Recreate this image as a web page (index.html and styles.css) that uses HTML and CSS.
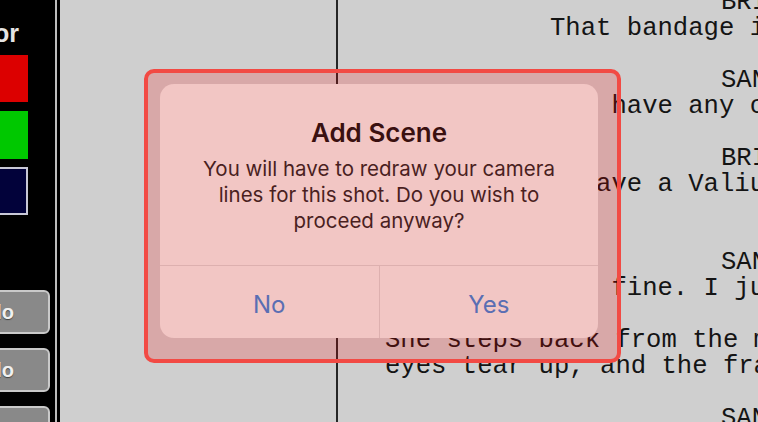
FILE: index.html
```html
<!DOCTYPE html>
<html lang="en">
<head>
<meta charset="utf-8">
<title>Script – Add Scene</title>
<link rel="stylesheet" href="styles.css">
</head>
<body>
<div class="app">
  <aside class="sidebar">
    <div class="tools">
      <div class="label">Color</div>
      <div class="swatch red"></div>
      <div class="swatch green"></div>
      <div class="swatch navy"></div>
      <button class="tbtn first">Undo</button>
      <button class="tbtn">Redo</button>
      <button class="tbtn">Clear</button>
    </div>
    <div class="rule"></div>
  </aside>
  <main class="script">
    <div class="gutter"></div>
    <div class="divider"></div>
    <div class="page">
      <div class="ln chr">BRIAN</div>
      <div class="ln dlg">That bandage is soaked through.</div>
      <div class="ln"> </div>
      <div class="ln chr">SANDY</div>
      <div class="ln dlg">You have any clean ones?</div>
      <div class="ln"> </div>
      <div class="ln chr">BRIAN</div>
      <div class="ln dlg">I have a Valium, if you want it.</div>
      <div class="ln"> </div>
      <div class="ln"> </div>
      <div class="ln chr">SANDY</div>
      <div class="ln dlg">I'm fine. I just need a minute.</div>
      <div class="ln"> </div>
      <div class="ln act">She steps back from the mirror. Her</div>
      <div class="ln act">eyes tear up, and the frame blurs.</div>
      <div class="ln"> </div>
      <div class="ln chr">SANDY</div>
    </div>
    <div class="overlay">
      <div class="alert" role="alertdialog">
        <div class="alert-body">
          <div class="alert-title">Add Scene</div>
          <div class="alert-msg">You will have to redraw your camera<br>lines for this shot. Do you wish to<br>proceed anyway?</div>
        </div>
        <div class="alert-actions">
          <button class="abtn">No</button>
          <button class="abtn">Yes</button>
        </div>
      </div>
    </div>
  </main>
</div>
</body>
</html>
```
FILE: styles.css
```css
* { box-sizing: border-box; }
html, body {
  margin: 0;
  padding: 0;
  width: 758px;
  height: 422px;
  overflow: hidden;
  background: #000;
}
.app {
  display: flex;
  width: 758px;
  height: 422px;
}

/* ---------- left tool panel ---------- */
.sidebar {
  display: flex;
  width: 60px;
  height: 422px;
  background: #000;
  padding-right: 3px;
  flex: none;
}
.tools {
  width: 55px;
  height: 422px;
  overflow: hidden;
  display: flex;
  flex-direction: column;
  align-items: flex-end;
}
.label {
  margin-top: 18px;
  margin-right: 36px;
  font-family: "Liberation Sans", Arial, sans-serif;
  font-weight: bold;
  font-size: 25px;
  line-height: 30px;
  color: #e4e4e4;
  white-space: nowrap;
}
.swatch {
  width: 60px;
  height: 47px;
  margin-right: 27px;
  flex: none;
}
.swatch.red { margin-top: 7px; background: #dc0000; }
.swatch.green { margin-top: 9px; background: #00c800; height: 48px; }
.swatch.navy {
  margin-top: 8px;
  height: 48px;
  background: #02023a;
  border: 2px solid #c8c8d6;
}
.tbtn {
  flex: none;
  width: 120px;
  height: 44px;
  margin-right: 5px;
  margin-top: 14px;
  padding: 0 34px 0 0;
  text-align: right;
  background: #898989;
  border: 2px solid #c9c9c9;
  border-radius: 6px;
  color: #f0f0f0;
  font-family: "Liberation Sans", Arial, sans-serif;
  font-weight: bold;
  font-size: 20px;
  text-shadow: 0 1px 1px #444;
}
.tbtn.first { margin-top: 75px; }
.rule {
  width: 2px;
  height: 422px;
  background: #bdbdbd;
}

/* ---------- script pane ---------- */
.script {
  position: relative;
  flex: 1;
  display: flex;
  height: 422px;
  background: #cfcfcf;
  overflow: hidden;
}
.gutter { width: 276px; flex: none; }
.divider { width: 2px; flex: none; background: #262626; }
.page {
  flex: 1;
  overflow: hidden;
  margin-top: -10px;
  font-family: "Courier New", "Nimbus Mono PS", "Nimbus Mono L", FreeMono, "Liberation Mono", monospace;
  font-size: 25.6px;
  line-height: 26px;
  color: #141414;
}
.ln { height: 26px; white-space: pre; }
.ln.act { padding-left: 47px; }
.ln.dlg { padding-left: 212px; }
.ln.chr { padding-left: 383px; }

/* ---------- dialog ---------- */
.overlay {
  position: absolute;
  left: 84px;
  top: 69px;
  width: 477px;
  height: 294px;
  border: 4px solid #f24a44;
  border-radius: 10px;
  background: rgba(255, 0, 0, 0.19);
  padding: 11px 19px 21px 12px;
}
.alert {
  width: 438px;
  height: 254px;
  background: #f2c6c4;
  border-radius: 14px;
  display: flex;
  flex-direction: column;
  overflow: hidden;
  font-family: Inter, "Liberation Sans", sans-serif;
}
.alert-body {
  padding: 34px 10px 31px;
  text-align: center;
  border-bottom: 1px solid #ddb0af;
}
.alert-title {
  font-size: 26px;
  font-weight: 600;
  line-height: 30px;
  color: #3a1010;
}
.alert-msg {
  margin-top: 8px;
  font-size: 20.5px;
  line-height: 26px;
  color: #4a1f1f;
}
.alert-actions {
  flex: 1;
  display: flex;
}
.abtn {
  flex: 1;
  border: 0;
  background: transparent;
  font-family: Inter, "Liberation Sans", sans-serif;
  font-size: 24px;
  color: #5a6eb3;
  padding: 4px 0 0;
}
.abtn + .abtn { border-left: 1px solid #ddb0af; }
```
